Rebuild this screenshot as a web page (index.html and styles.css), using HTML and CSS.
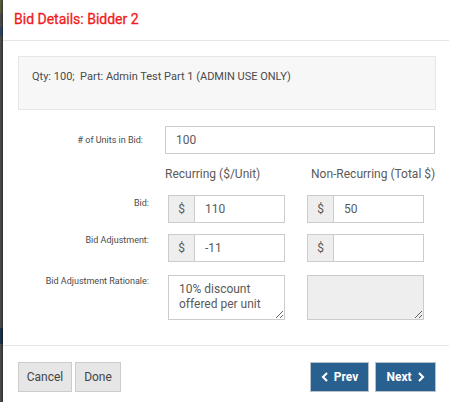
FILE: index.html
```html
<!DOCTYPE html>
<html>
<head>
<meta charset="utf-8">
<link rel="stylesheet" href="styles.css">
</head>
<body>
<div class="modal">
  <div class="modal-header">
    <h4 class="modal-title">Bid Details: Bidder 2</h4>
  </div>
  <div class="modal-body">
    <div class="well">Qty: 100;&nbsp; Part: Admin Test Part 1 (ADMIN USE ONLY)</div>

    <div class="row row-units">
      <label class="lbl lbl-units"># of Units in Bid:</label>
      <input class="form-control units" type="text" value="100">
    </div>

    <div class="row row-heads">
      <div class="lbl"></div>
      <div class="head head-1">Recurring ($/Unit)</div>
      <div class="head head-2">Non-Recurring (Total $)</div>
    </div>

    <div class="row row-bid">
      <label class="lbl lbl-top">Bid:</label>
      <div class="input-group">
        <span class="addon">$</span>
        <input class="form-control" type="text" value="110">
      </div>
      <div class="input-group">
        <span class="addon">$</span>
        <input class="form-control" type="text" value="50">
      </div>
    </div>

    <div class="row row-adj">
      <label class="lbl">Bid Adjustment:</label>
      <div class="input-group">
        <span class="addon">$</span>
        <input class="form-control" type="text" value="-11">
      </div>
      <div class="input-group">
        <span class="addon">$</span>
        <input class="form-control" type="text" value="">
      </div>
    </div>

    <div class="row row-rat">
      <label class="lbl">Bid Adjustment Rationale:</label>
      <textarea class="ta">10% discount offered per unit</textarea>
      <textarea class="ta ta-disabled" disabled></textarea>
    </div>
  </div>
  <div class="modal-footer">
    <div class="btns-left">
      <button class="btn btn-default btn-cancel">Cancel</button>
      <button class="btn btn-default btn-done">Done</button>
    </div>
    <div class="btns-right">
      <button class="btn btn-primary btn-prev"><svg class="chev" viewBox="0 0 10 12" width="8" height="10"><path d="M7.5 1 L2.5 6 L7.5 11" fill="none" stroke="#fff" stroke-width="2.6" stroke-linejoin="miter"/></svg>Prev</button>
      <button class="btn btn-primary btn-next">Next<svg class="chev chev-r" viewBox="0 0 10 12" width="8" height="10"><path d="M2.5 1 L7.5 6 L2.5 11" fill="none" stroke="#fff" stroke-width="2.6" stroke-linejoin="miter"/></svg></button>
    </div>
  </div>
</div>
</body>
</html>
```
FILE: styles.css
```css
html, body {
  margin: 0;
  padding: 0;
  height: 100%;
}
body {
  display: flex;
  background:
    linear-gradient(to bottom,
      #5a6040 0px, #5a6040 13px,
      #4e4e4e 13px, #4e4e4e 27px,
      #2f4a66 27px, #2f4a66 36px,
      #4e4e4e 36px, #4e4e4e 328px,
      #1e3450 328px, #1e3450 344px,
      #4e4e4e 344px);
  font-family: Roboto, "Liberation Sans", sans-serif;
  overflow: hidden;
}
.modal {
  margin-left: 3px;
  flex: 1;
  background: #fff;
  height: 402px;
  box-shadow: -1px 0 2px rgba(0,0,0,0.5);
  display: flex;
  flex-direction: column;
}
.modal-header {
  border-bottom: 1px solid #e5e5e5;
  padding-left: 11px;
  box-sizing: border-box;
  height: 41px;
}
.modal-title {
  margin: 0;
  padding-top: 11px;
  font-size: 14px;
  line-height: 17px;
  font-weight: 400;
  color: #f21b1b;
  -webkit-text-stroke: 0.3px #f21b1b;
}
.modal-body {
  padding: 15px 13px 0 15px;
  height: 304px;
  box-sizing: border-box;
}
.well {
  background: #f7f7f7;
  border: 1px solid #e6e6e6;
  height: 54px;
  box-sizing: border-box;
  padding: 13px 0 0 13px;
  font-size: 11px;
  line-height: 14px;
  color: #4a4a4a;
}
.row {
  display: flex;
  align-items: flex-start;
}
.lbl {
  width: 131px;
  flex: none;
  text-align: right;
  font-size: 9px;
  line-height: 12px;
  color: #4a4a4a;
  padding-right: 19px;
}
.row-units {
  margin-top: 16px;
  align-items: center;
}
.lbl-units {
  width: 125px;
  padding-right: 22px;
}
.form-control {
  box-sizing: border-box;
  height: 28px;
  border: 1px solid #ccc;
  font-family: Roboto, "Liberation Sans", sans-serif;
  font-size: 12px;
  color: #5a5a5a;
  padding: 0 10px;
  margin: 0;
  outline: none;
  background: #fff;
}
.units {
  width: 270px;
}
.row-heads {
  margin-top: 12px;
}
.head {
  font-size: 12px;
  line-height: 16px;
  color: #5a5a5a;
}
.head-1 {
  width: 146px;
  margin-left: -3px;
}
.row-bid {
  margin-top: 13px;
}
.lbl-top {
  padding-top: 2px;
}
.row-adj {
  margin-top: 11px;
}
.row-rat {
  margin-top: 13px;
}
.input-group {
  display: flex;
  width: 117px;
  height: 28px;
  flex: none;
}
.input-group + .input-group,
.ta + .ta {
  margin-left: 22px;
}
.addon {
  box-sizing: border-box;
  width: 26px;
  flex: none;
  background: #eee;
  border: 1px solid #ccc;
  border-right: none;
  color: #5a5a5a;
  font-size: 12px;
  display: flex;
  align-items: center;
  justify-content: center;
}
.input-group .form-control {
  flex: 1;
  min-width: 0;
  width: 10px;
}
.ta {
  box-sizing: border-box;
  width: 117px;
  height: 45px;
  flex: none;
  border: 1px solid #ccc;
  font-family: Roboto, "Liberation Sans", sans-serif;
  font-size: 12px;
  line-height: 15px;
  color: #5a5a5a;
  padding: 6px 10px;
  margin: 0;
  resize: both;
  background: #fff;
  overflow: hidden;
}
.ta-disabled {
  background: #eee;
}
.modal-footer {
  border-top: 1px solid #e5e5e5;
  padding: 16px 13px 0 15px;
  display: flex;
  justify-content: space-between;
  align-items: flex-start;
}
.btns-left, .btns-right {
  display: flex;
}
.btn {
  box-sizing: border-box;
  height: 30px;
  font-family: Roboto, "Liberation Sans", sans-serif;
  font-size: 12px;
  padding: 0;
  margin: 0;
  display: flex;
  align-items: center;
  justify-content: center;
  border-radius: 0;
  cursor: pointer;
}
.btn-default {
  background: #e6e6e6;
  border: 1px solid #ccc;
  color: #444;
}
.btn-cancel { width: 54px; }
.btn-done { width: 46px; margin-left: 3px; }
.btn-primary {
  background: #286090;
  border: 1px solid #b8c0c8;
  color: #fff;
  font-weight: 700;
}
.btn-prev { width: 59px; }
.btn-next { width: 61px; margin-left: 6px; }
.chev { margin-right: 5px; }
.chev-r { margin-right: 0; margin-left: 5px; }
```
